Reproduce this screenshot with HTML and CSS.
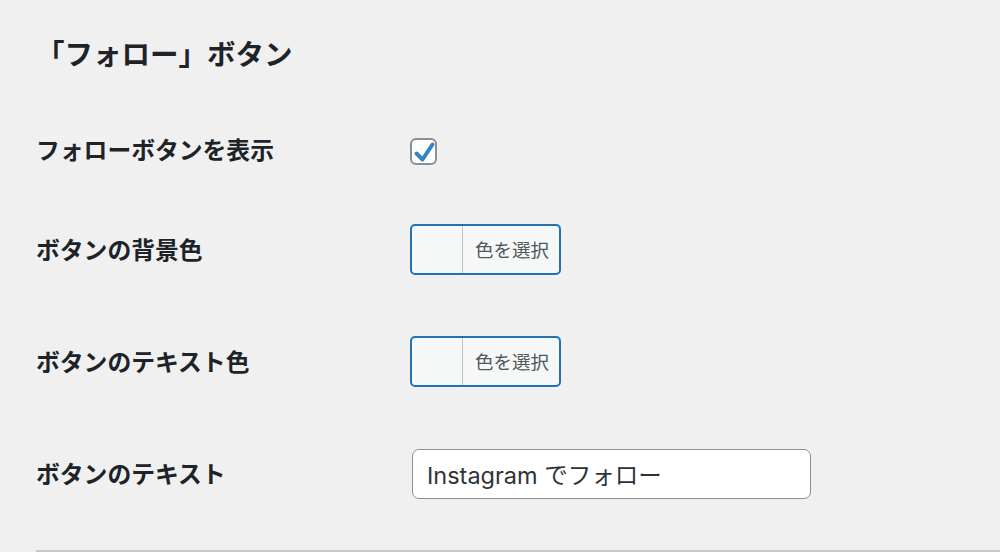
FILE: index.html
```html
<!DOCTYPE html>
<html lang="ja">
<head>
<meta charset="UTF-8" />
<meta name="viewport" content="width=device-width, initial-scale=1" />
<title>フォローボタン設定</title>
<link rel="stylesheet" href="styles.css">
</head>
<body>
  <main class="wrap">
    <h2 class="section-title">「フォロー」ボタン</h2>

    <div class="form-table">
      <div class="row row-first">
        <label class="row-label" for="showFollow">フォローボタンを表示</label>
        <div class="row-field">
          <span class="check" id="showFollow" role="checkbox" aria-checked="true">
            <svg width="27" height="27" viewBox="0 0 27 27" aria-hidden="true">
              <path d="M6.5 15.5 L12.5 21.5 L22.5 6.5" fill="none" stroke="#3582c4" stroke-width="4" stroke-linecap="round" stroke-linejoin="round" />
            </svg>
          </span>
        </div>
      </div>

      <div class="row">
        <span class="row-label">ボタンの背景色</span>
        <div class="row-field">
          <button type="button" class="color-result">
            <span class="swatch"></span>
            <span class="color-text">色を選択</span>
          </button>
        </div>
      </div>

      <div class="row">
        <span class="row-label">ボタンのテキスト色</span>
        <div class="row-field">
          <button type="button" class="color-result">
            <span class="swatch"></span>
            <span class="color-text">色を選択</span>
          </button>
        </div>
      </div>

      <div class="row">
        <label class="row-label" for="followText">ボタンのテキスト</label>
        <div class="row-field">
          <input type="text" id="followText" class="regular-text" value="Instagram でフォロー" />
        </div>
      </div>
    </div>

    <hr class="divider" />
  </main>
</body>
</html>
```

FILE: styles.css
```css
/* Reset & base */
* {
  box-sizing: border-box;
}
body {
  margin: 0;
  background: #f0f0f1;
  color: #1d2327;
  font-family: "Noto Sans CJK JP", "Noto Sans", sans-serif;
  overflow: hidden;
}
.wrap {
  padding: 33px 0 0 36px;
}
.section-title {
  margin: 0 0 34px;
  font-size: 28.5px;
  line-height: 40px;
  font-weight: 700;
  color: #1d2327;
}

/* Table rows */
.form-table {
  display: flex;
  flex-direction: column;
}
.row {
  display: grid;
  grid-template-columns: 374px 1fr;
  align-items: center;
  height: 112px;
}
.row-first {
  height: 86px;
}
.row-label {
  font-size: 23.8px;
  font-weight: 700;
  line-height: 32px;
  color: #1d2327;
  margin-top: -1px;
}
.row-first .row-label {
  margin-top: -2px;
}
.row-field {
  display: flex;
  align-items: center;
}

/* Checkbox */
.check {
  display: block;
  width: 27px;
  height: 27px;
  border: 2px solid #8c8f94;
  border-radius: 6px;
  background: #fff;
  position: relative;
  margin-top: 2px;
}
.check svg {
  position: absolute;
  left: -2px;
  top: -2px;
}

/* Color picker button */
.color-result {
  display: flex;
  width: 151px;
  height: 51px;
  padding: 0;
  border: 2px solid #2271b1;
  border-radius: 5px;
  background: #f6f7f7;
  overflow: hidden;
  cursor: pointer;
  font-family: inherit;
}
.swatch {
  width: 51px;
  height: 100%;
  border-right: 1.5px solid #c3c4c7;
}
.color-text {
  flex: 1;
  height: 100%;
  display: flex;
  align-items: center;
  justify-content: center;
  font-size: 18.5px;
  color: #50575e;
  padding-left: 2px;
}

/* Text input */
.regular-text {
  width: 399px;
  height: 50px;
  margin: 2px 0 0 2px;
  padding: 0 14px;
  border: 1.7px solid #8c8f94;
  border-radius: 7px;
  background: #fff;
  font-family: Inter, "Noto Sans CJK JP", sans-serif;
  font-size: 23.5px;
  color: #2c3338;
  outline: none;
}

.divider {
  margin: 21px 0 0;
  border: 0;
  border-top: 2px solid #c8c8ca;
  height: 0;
}
```
